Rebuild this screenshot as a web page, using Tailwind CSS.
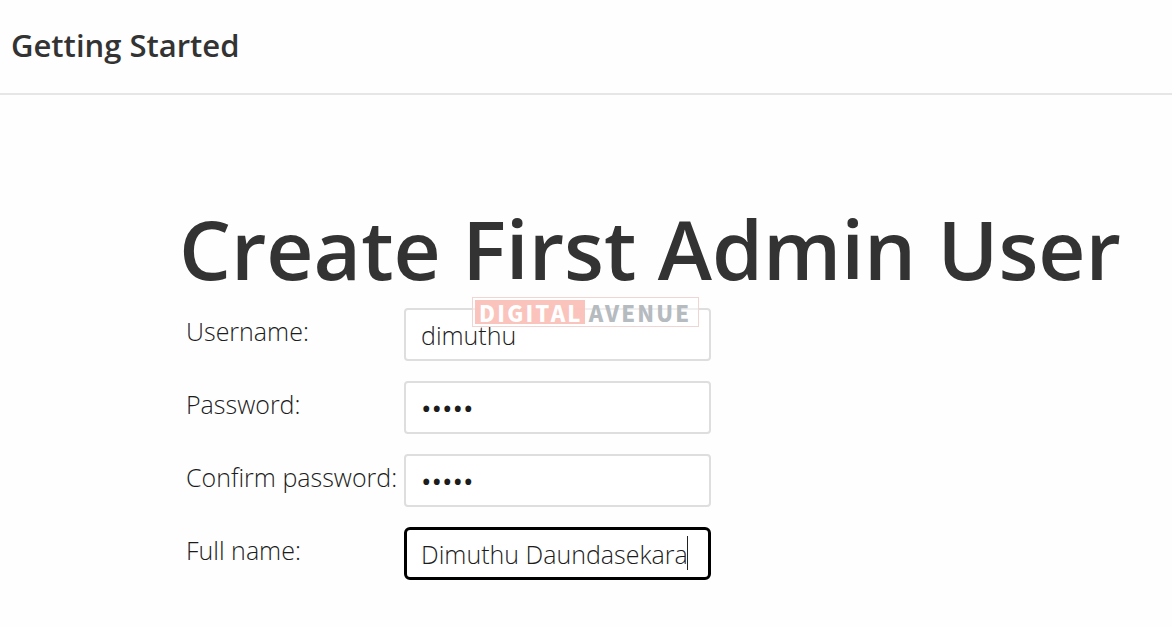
<!DOCTYPE html>
<html lang="en">
<head>
<meta charset="utf-8">
<meta name="viewport" content="width=device-width, initial-scale=1">
<title>Getting Started</title>
<script src="https://cdn.jsdelivr.net/npm/@tailwindcss/browser@4"></script>
</head>
<body class="bg-[#fefefe] font-['Open_Sans','Noto_Sans',sans-serif] text-[#333]">
<header class="border-b-2 border-[#e6e6e6] px-[11px] pt-6 pb-[27px]">
  <p class="text-[31px] leading-[42px] font-semibold">Getting Started</p>
</header>
<main class="pt-[94px] pl-[179px]">
  <h1 class="text-[82px] leading-[118px] font-semibold whitespace-nowrap">Create First Admin User</h1>
  <form class="relative grid w-fit grid-cols-[218px_307px] gap-y-5 pl-[7px] pt-px text-[25px] font-light text-[#1c1c1c]">
    <label for="username" class="pt-[3px] leading-10 whitespace-nowrap">Username:</label>
    <input id="username" type="text" value="dimuthu" class="h-[53px] w-full rounded-sm border-2 border-[#dedede] bg-white px-[15px] outline-none">
    <label for="password" class="pt-[3px] leading-10 whitespace-nowrap">Password:</label>
    <input id="password" type="password" value="admin" class="h-[53px] w-full rounded-sm border-2 border-[#dedede] bg-white px-[15px] text-[28px] font-normal outline-none">
    <label for="confirm" class="pt-[3px] leading-10 whitespace-nowrap">Confirm password:</label>
    <input id="confirm" type="password" value="admin" class="h-[53px] w-full rounded-sm border-2 border-[#dedede] bg-white px-[15px] text-[28px] font-normal outline-none">
    <label for="fullname" class="pt-[3px] leading-10 whitespace-nowrap">Full name:</label>
    <div class="relative">
      <input id="fullname" type="text" value="Dimuthu Daundasekara" class="h-[53px] w-full rounded-md border-3 border-black bg-white px-[14px] outline-none">
      <span class="absolute top-[9px] left-[283px] h-[34px] w-px bg-[#222]"></span>
    </div>
    <div class="absolute -top-[10px] left-[293px] flex h-[30px] w-[227px] items-center border border-[#f0d5d2] bg-white/50 px-0.5 font-['Noto_Sans_CJK_JP',sans-serif] text-[22px] leading-6 font-black tracking-widest">
      <span class="bg-[#fabdb5]/90 pr-0.5 pl-1 text-white">DIGITAL</span><span class="pl-1 text-[#b5bbbf]">AVENUE</span>
    </div>
  </form>
</main>
</body>
</html>
